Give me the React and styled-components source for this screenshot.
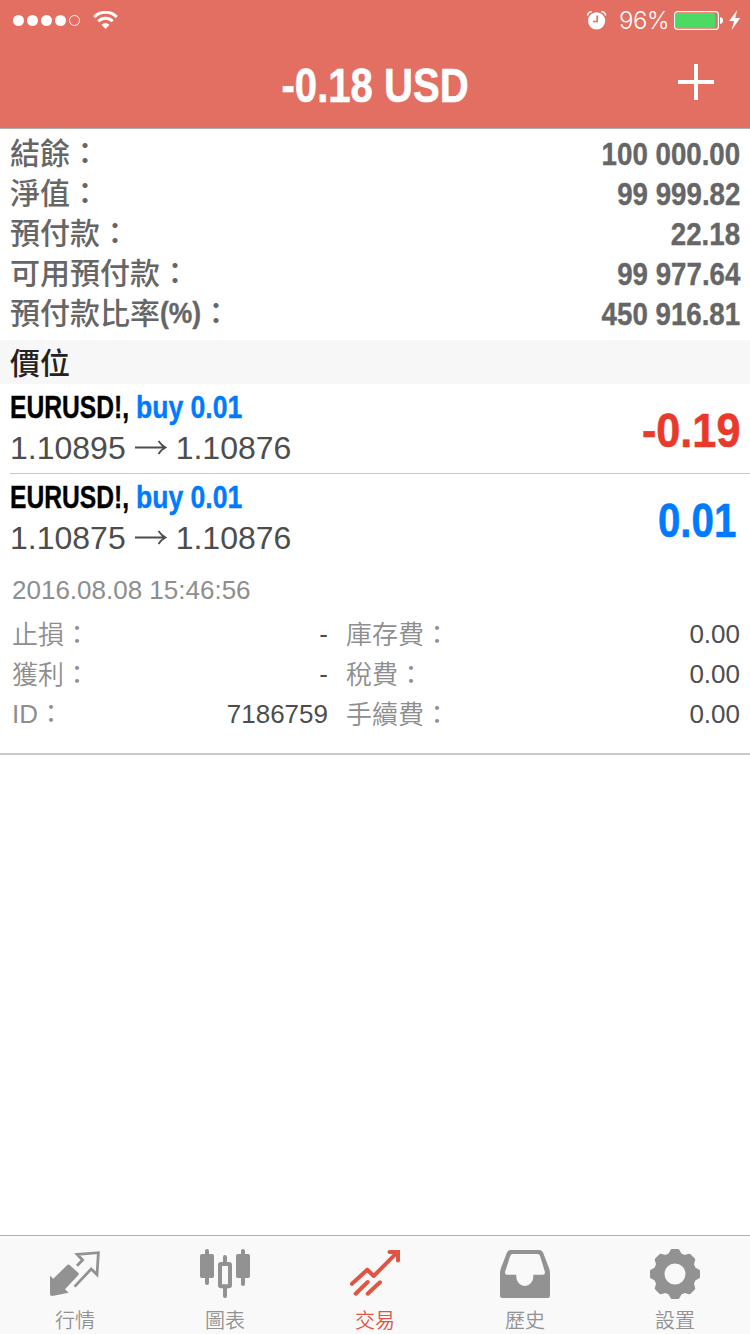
import React from 'react'
import styled, { createGlobalStyle } from 'styled-components'

const GlobalStyle = createGlobalStyle`
  * { box-sizing: border-box; }
  body {
    margin: 0;
    background: #fff;
    font-family: "Liberation Sans", "Noto Sans CJK TC", sans-serif;
  }
  svg { display: block; flex: none; }
`

const Screen = styled.div`
  width: 750px;
  height: 1334px;
  display: flex;
  flex-direction: column;
  background: #fff;
  overflow: hidden;
`

// bold face squeezed horizontally, $s is the horizontal scale
const Condensed = styled.span`
  display: block;
  font-weight: bold;
  white-space: nowrap;
  -webkit-text-stroke: 0.012em currentColor;
  transform: scaleX(${p => p.$s});
  transform-origin: ${p => p.$from || 'left'} center;
`

/* header */
const Header = styled.header`
  height: 129px;
  flex: none;
  background: #e36f62;
  border-bottom: 1px solid #b2aeae;
  color: #fff;
`

const StatusBar = styled.div`
  height: 40px;
  display: flex;
  align-items: center;
  justify-content: space-between;
  padding: 0 9px 0 13px;
`

const StatusGroup = styled.div`
  display: flex;
  align-items: center;
  height: 40px;
`

const Percent = styled.span`
  width: 49px;
  margin: 2px 6px 0 12px;
  font-family: Inter, "Liberation Sans", sans-serif;
  font-size: 24px;
  font-weight: 350;
  line-height: 40px;
  letter-spacing: -0.5px;
  white-space: nowrap;
`

const TitleBar = styled.div`
  height: 84px;
  display: grid;
  grid-template-columns: 72px 1fr 72px;
  align-items: center;
`

const Title = styled.h1`
  margin: 8px 0 0;
  grid-column: 2;
  display: flex;
  justify-content: center;
  font-size: 48px;
  line-height: 56px;
`

const AddButton = styled.button`
  border: 0;
  padding: 0;
  background: none;
  color: inherit;
  display: flex;
`

/* account summary */
const Summary = styled.section`
  height: 211px;
  flex: none;
  padding: 5px 10px 0;
  color: #666;
`

const SummaryRow = styled.div`
  height: 40px;
  display: flex;
  justify-content: space-between;
  font-size: 32px;
  line-height: 40px;
`

const SummaryLabel = styled.span`
  display: flex;
  font-family: "Noto Sans CJK TC", sans-serif;
  font-size: 30px;
  font-weight: 500;
  line-height: 34px;
`

const Unit = styled.span`
  width: 41px;
  font-family: "Liberation Sans", sans-serif;
  line-height: 37px;
`

const SectionTitle = styled.h2`
  height: 44px;
  flex: none;
  margin: 0;
  padding: 0 10px;
  background: #f7f7f7;
  color: #222;
  font-family: "Noto Sans CJK TC", sans-serif;
  font-size: 30px;
  font-weight: 500;
  line-height: 42px;
`

/* positions */
const Position = styled.div`
  height: ${p => (p.$divider ? 90 : 89)}px;
  flex: none;
  margin-left: 10px;
  padding-right: 10px;
  display: flex;
  justify-content: space-between;
  border-bottom: ${p => (p.$divider ? '1px solid #c8c7cc' : '0')};
`

const Order = styled.div`
  height: 44px;
  display: flex;
  padding-top: 3px;
  font-size: 32px;
  line-height: 40px;
`

const Symbol = styled.div`
  width: 126px;
  color: #000;
`

const Side = styled.div`
  color: #007aff;
`

const Prices = styled.div`
  display: flex;
  align-items: center;
  gap: 9px;
  color: #4d4d4d;
  font-size: 32px;
  line-height: 40px;
`

const Profit = styled.div`
  padding-top: 19px;
  padding-right: ${p => p.$pad || 0}px;
  color: ${p => p.$color};
  font-size: 48px;
  line-height: 56px;
`

const Details = styled.section`
  height: 192px;
  flex: none;
  padding: 7px 10px 0 12px;
  border-bottom: 2px solid #c8c7cc;
  color: #8e8e8e;
  font-size: 26px;
`

const Time = styled.div`
  height: 44px;
  line-height: 40px;
`

const DetailGrid = styled.div`
  display: grid;
  grid-template-columns: 316px 394px;
  column-gap: 18px;
  grid-auto-rows: 40px;
`

const Detail = styled.div`
  display: flex;
  justify-content: space-between;
  line-height: 40px;
`

const DetailLabel = styled.span`
  font-family: ${p => (p.$latin ? '"Liberation Sans", ' : '')}"Noto Sans CJK TC", sans-serif;
  font-weight: 350;
  line-height: ${p => (p.$latin ? 40 : 38)}px;
`

const DetailValue = styled.span`
  color: #4d4d4d;
`

/* tabs */
const TabBar = styled.nav`
  height: 99px;
  flex: none;
  margin-top: auto;
  display: grid;
  grid-template-columns: repeat(5, 150px);
  background: #f9f9f9;
  border-top: 1px solid #b2b2b2;
`

const Tab = styled.div`
  display: flex;
  flex-direction: column;
  align-items: center;
  padding-top: 13px;
  color: ${p => (p.$active ? '#e05444' : '#929292')};
`

const TabLabel = styled.span`
  margin-top: 7px;
  font-family: "Noto Sans CJK TC", sans-serif;
  font-size: 20px;
  font-weight: 350;
  line-height: 28px;
`

const Signal = () => (
  <svg width="68" height="12" viewBox="0 0 68 12" fill="currentColor">
    {[5.5, 19.5, 33.5, 47.5].map(x => <circle key={x} cx={x} cy="6.5" r="5.5" />)}
    <circle cx="61.5" cy="6.5" r="5" fill="none" stroke="currentColor" />
  </svg>
)

const WifiIcon = styled.svg`
  margin-left: 12px;
`

const Wifi = () => (
  <WifiIcon width="25" height="18" viewBox="0 0 25 18" fill="none" stroke="currentColor">
    <path d="M1.2 6A16 16 0 0 1 23.8 6" strokeWidth="3" />
    <path d="M5.3 10.2A10.2 10.2 0 0 1 19.7 10.2" strokeWidth="3" />
    <path d="M8.5 13.7Q12.5 10.3 16.5 13.7L12.5 18Z" fill="currentColor" stroke="none" />
  </WifiIcon>
)

const Alarm = () => (
  <svg width="20" height="19" viewBox="0 0 20 19" fill="none" stroke="currentColor">
    <circle cx="9.6" cy="9.8" r="8.6" fill="currentColor" stroke="none" />
    <path d="M.6 4.5Q.9 1 4.8 .8M18.6 4.5Q18.3 1 14.4 .8" strokeWidth="1.5" />
    <path d="M10.2 4.5V10.5H6" stroke="#e36f62" strokeWidth="1.6" />
  </svg>
)

const Battery = () => (
  <svg width="50" height="19" viewBox="0 0 50 19">
    <rect x=".6" y=".6" width="43.8" height="17.8" rx="3" fill="none" stroke="#fff" strokeWidth="1.2" />
    <rect x="2" y="2" width="39.3" height="15" rx="1" fill="#4cd964" />
    <path d="M46 6Q49 6.5 49 9.5T46 13Z" fill="#fff" />
  </svg>
)

const BoltIcon = styled.svg`
  margin-left: 5px;
`

const Bolt = () => (
  <BoltIcon width="12" height="20" viewBox="0 0 12 20" fill="currentColor">
    <path d="M8.3 0L0 11H5L2.7 20L11.2 8H6.2Z" />
  </BoltIcon>
)

const Arrow = () => (
  <svg width="32" height="16" viewBox="0 0 32 16" fill="none" stroke="currentColor" strokeWidth="1.8">
    <path d="M0 7.5H30M23.5 1Q26.5 5.5 30.5 7.5Q26.5 9.5 23.5 14" />
  </svg>
)

const icons = {
  quotes: (
    <>
      <path d="M0 26.7L3.3 29.7L17 16.2Q18.3 15 19.7 16L28.4 24Q29.3 25 28.4 26L15 40.3L18.7 43.7L2.3 47Q0 47 0 45Z" fill="currentColor" />
      <path d="M27 16.8L32.6 11L27.2 5.4L48.4 3.7L47 25.6L41.2 20L24.6 37.6" fill="none" stroke="currentColor" strokeWidth="2.8" />
    </>
  ),
  charts: (
    <g fill="currentColor">
      <rect x="0" y="5" width="14" height="24" rx="1.8" />
      <rect x="5" y="0" width="4" height="36" rx="2" />
      <rect x="36" y="5" width="14" height="24" rx="1.8" />
      <rect x="41" y="0" width="4" height="37" rx="2" />
      <rect x="20" y="15" width="10" height="22.3" rx="1" fill="none" stroke="currentColor" strokeWidth="4" />
      <path d="M23 14V8a2 2 0 0 1 4 0V14ZM23 38V47a2 2 0 0 0 4 0V38Z" />
    </g>
  ),
  trade: (
    <g fill="none" stroke="currentColor" strokeWidth="4" strokeLinecap="round" strokeLinejoin="round">
      <path d="M2 34.8L17.3 20.7L23.7 27L46.5 4.2M5.7 44.7L17.7 33M17.7 44.7L30 33.3" />
      <path d="M39.5 3H48V11.5" strokeLinejoin="miter" />
      <path d="M43 3H48V9Z" fill="currentColor" stroke="none" />
    </g>
  ),
  history: (
    <path
      fill="currentColor"
      fillRule="evenodd"
      d="M11 1H39.5Q42 1 43 3.5L49 19Q50 22 50 25V46.5Q50 49 47.5 49H2.5Q0 49 0 46.5V25Q0 22 1 19L7 3.5Q8 1 10.5 1ZM12.8 5Q11 5 10.3 6.8L5.2 22.5Q4.4 25.8 7 25.8H16.3V28A8.5 9 0 0 0 33.3 28V25.8H43Q45.4 25.8 44.8 22.5L40 6.8Q39.3 5 37.5 5Z"
    />
  ),
  settings: (
    <g fill="none" stroke="currentColor">
      <circle cx="25" cy="25" r="15.9" strokeWidth="10.8" />
      {[0, 45, 90, 135, 180, 225, 270, 315].map(a => (
        <path
          key={a}
          d="M22 1.5H28L30.8 6.5H19.2Z"
          fill="currentColor"
          strokeWidth="3"
          strokeLinejoin="round"
          transform={`rotate(${a} 25 25)`}
        />
      ))}
    </g>
  ),
}

const account = [
  { label: '結餘', value: '100 000.00' },
  { label: '淨值', value: '99 999.82' },
  { label: '預付款', value: '22.18' },
  { label: '可用預付款', value: '99 977.64' },
  { label: '預付款比率', unit: '(%)', value: '450 916.81' },
]

const details = [
  ['止損：', '-'],
  ['庫存費：', '0.00'],
  ['獲利：', '-'],
  ['稅費：', '0.00'],
  ['ID：', '7186759'],
  ['手續費：', '0.00'],
]

const tabs = [
  ['quotes', '行情'],
  ['charts', '圖表'],
  ['trade', '交易'],
  ['history', '歷史'],
  ['settings', '設置'],
]

function PositionRow({ open, current, profit, color, scale, pad, divider }) {
  return (
    <Position $divider={divider}>
      <div>
        <Order>
          <Symbol><Condensed $s={0.77}>EURUSD!,</Condensed></Symbol>
          <Side><Condensed $s={0.83}>buy 0.01</Condensed></Side>
        </Order>
        <Prices>
          <span>{open}</span>
          <Arrow />
          <span>{current}</span>
        </Prices>
      </div>
      <Profit $color={color} $pad={pad}>
        <Condensed $s={scale} $from="right">{profit}</Condensed>
      </Profit>
    </Position>
  )
}

function App() {
  return (
    <Screen lang="zh-Hant">
      <GlobalStyle />
      <Header>
        <StatusBar>
          <StatusGroup>
            <Signal />
            <Wifi />
          </StatusGroup>
          <StatusGroup>
            <Alarm />
            <Percent>96%</Percent>
            <Battery />
            <Bolt />
          </StatusGroup>
        </StatusBar>
        <TitleBar>
          <Title><Condensed $s={0.835} $from="center">-0.18 USD</Condensed></Title>
          <AddButton aria-label="add">
            <svg width="36" height="36" viewBox="0 0 36 36" stroke="currentColor" strokeWidth="4">
              <path d="M18 0V36M0 18H36" />
            </svg>
          </AddButton>
        </TitleBar>
      </Header>

      <Summary>
        {account.map(({ label, unit, value }) => (
          <SummaryRow key={label}>
            <SummaryLabel>
              {label}
              {unit && <Unit><Condensed $s={0.88}>{unit}</Condensed></Unit>}
              ：
            </SummaryLabel>
            <Condensed $s={0.865} $from="right">{value}</Condensed>
          </SummaryRow>
        ))}
      </Summary>

      <SectionTitle>價位</SectionTitle>
      <PositionRow open="1.10895" current="1.10876" profit="-0.19" color="#e8392b" scale={0.9} divider />
      <PositionRow open="1.10875" current="1.10876" profit="0.01" color="#007aff" scale={0.84} pad={4} />

      <Details>
        <Time>2016.08.08 15:46:56</Time>
        <DetailGrid>
          {details.map(([label, value]) => (
            <Detail key={label}>
              <DetailLabel $latin={label === 'ID：'}>{label}</DetailLabel>
              <DetailValue>{value}</DetailValue>
            </Detail>
          ))}
        </DetailGrid>
      </Details>

      <TabBar>
        {tabs.map(([name, label]) => (
          <Tab key={name} $active={name === 'trade'}>
            <svg width="50" height="50" viewBox="0 0 50 50">{icons[name]}</svg>
            <TabLabel>{label}</TabLabel>
          </Tab>
        ))}
      </TabBar>
    </Screen>
  )
}

export default App
